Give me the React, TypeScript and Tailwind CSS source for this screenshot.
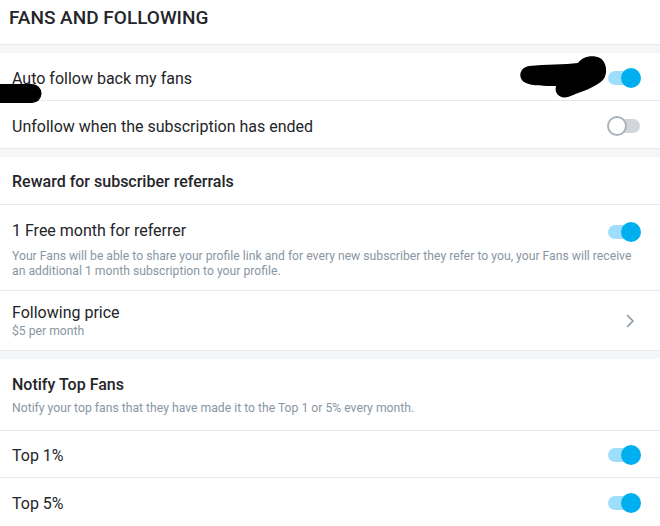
import React from 'react';

function Toggle({ on }: { on: boolean }) {
  if (on) {
    return (
      <div className="relative mt-[2px] h-[14px] w-[32px] shrink-0 rounded-full bg-[#9fdefa]">
        <div className="absolute right-[-1px] top-[-3px] h-[20px] w-[20px] rounded-full bg-[#00aff0]" />
      </div>
    );
  }
  return (
    <div className="relative mt-[2px] h-[14px] w-[32px] shrink-0 rounded-full bg-[#d2d6db]">
      <div className="absolute left-[-1px] top-[-3px] h-[20px] w-[20px] rounded-full border-2 border-[#aab3bd] bg-white" />
    </div>
  );
}

export default function App() {
  return (
    <div
      className="relative h-[526px] w-[660px] overflow-hidden bg-white text-[#242529]"
      style={{ fontFamily: 'Roboto, "Noto Sans", sans-serif' }}
    >
      {/* Header */}
      <div className="h-[45px] border-b border-[#e6e9ee] px-[9px] pt-[6px]">
        <h1 className="text-[19px] font-medium uppercase leading-[24px]">Fans and following</h1>
      </div>
      <div className="h-[8px] bg-[#f5f6f8]" />

      {/* Auto follow */}
      <div className="flex h-[48px] items-center justify-between border-b border-[#e6e9ee] pl-[12px] pr-[20px]">
        <span className="mt-[4px] text-[16px] leading-[20px]">Auto follow back my fans</span>
        <Toggle on />
      </div>
      <div className="flex h-[48px] items-center justify-between border-b border-[#e6e9ee] pl-[12px] pr-[20px]">
        <span className="mt-[4px] text-[16px] leading-[20px]">Unfollow when the subscription has ended</span>
        <Toggle on={false} />
      </div>
      <div className="h-[8px] bg-[#f5f6f8]" />

      {/* Referrals */}
      <div className="flex h-[48px] items-center border-b border-[#e6e9ee] px-[12px]">
        <span className="mt-[2px] text-[16px] font-medium leading-[20px]">Reward for subscriber referrals</span>
      </div>
      <div className="h-[86px] border-b border-[#e6e9ee] pl-[12px] pr-[20px] pt-[16px]">
        <div className="flex items-center justify-between">
          <span className="text-[16px] leading-[20px]">1 Free month for referrer</span>
          <Toggle on />
        </div>
        <p className="mt-[8px] whitespace-nowrap text-[12.2px] leading-[15px] text-[#8a96a3]">
          Your Fans will be able to share your profile link and for every new subscriber they refer to you, your Fans will receive
          <br />
          an additional 1 month subscription to your profile.
        </p>
      </div>
      <div className="flex h-[60px] items-center justify-between border-b border-[#e6e9ee] pl-[12px] pr-[20px]">
        <div className="flex flex-col">
          <span className="text-[16px] leading-[20px]">Following price</span>
          <span className="text-[12.2px] leading-[16px] text-[#8a96a3]">$5 per month</span>
        </div>
        <svg width="16" height="16" viewBox="0 0 16 16" fill="none" className="mr-[2px]">
          <path d="M5.5 2.5 L11 8 L5.5 13.5" stroke="#8a96a3" strokeWidth="1.6" strokeLinecap="round" strokeLinejoin="round" />
        </svg>
      </div>
      <div className="h-[8px] bg-[#f5f6f8]" />

      {/* Notify top fans */}
      <div className="h-[72px] border-b border-[#e6e9ee] px-[12px] pt-[16px]">
        <div className="text-[16px] font-medium leading-[20px]">Notify Top Fans</div>
        <div className="mt-[5px] text-[12.2px] leading-[16px] text-[#8a96a3]">
          Notify your top fans that they have made it to the Top 1 or 5% every month.
        </div>
      </div>
      <div className="flex h-[47px] items-center justify-between border-b border-[#e6e9ee] pl-[12px] pr-[20px]">
        <span className="mt-[4px] text-[16px] leading-[20px]">Top 1%</span>
        <Toggle on />
      </div>
      <div className="flex h-[48px] items-center justify-between pl-[12px] pr-[20px]">
        <span className="mt-[4px] text-[16px] leading-[20px]">Top 5%</span>
        <Toggle on />
      </div>

      {/* redaction marks over the content */}
      <svg className="pointer-events-none absolute left-0 top-0" width="660" height="526" viewBox="0 0 660 526">
        <path d="M0 84 H32 A9.5 9.5 0 0 1 32 103 H0 Z" fill="#000" />
        <path
          d="M529 66 C545 64 565 65 578 63 C582 57 592 54 600 58 C607 62 608 74 603 80 C595 88 580 92 568 97 C560 99 554 94 556 86 C545 86 532 86 526 83 C518 80 518 68 529 66 Z"
          fill="#000"
        />
      </svg>
    </div>
  );
}
